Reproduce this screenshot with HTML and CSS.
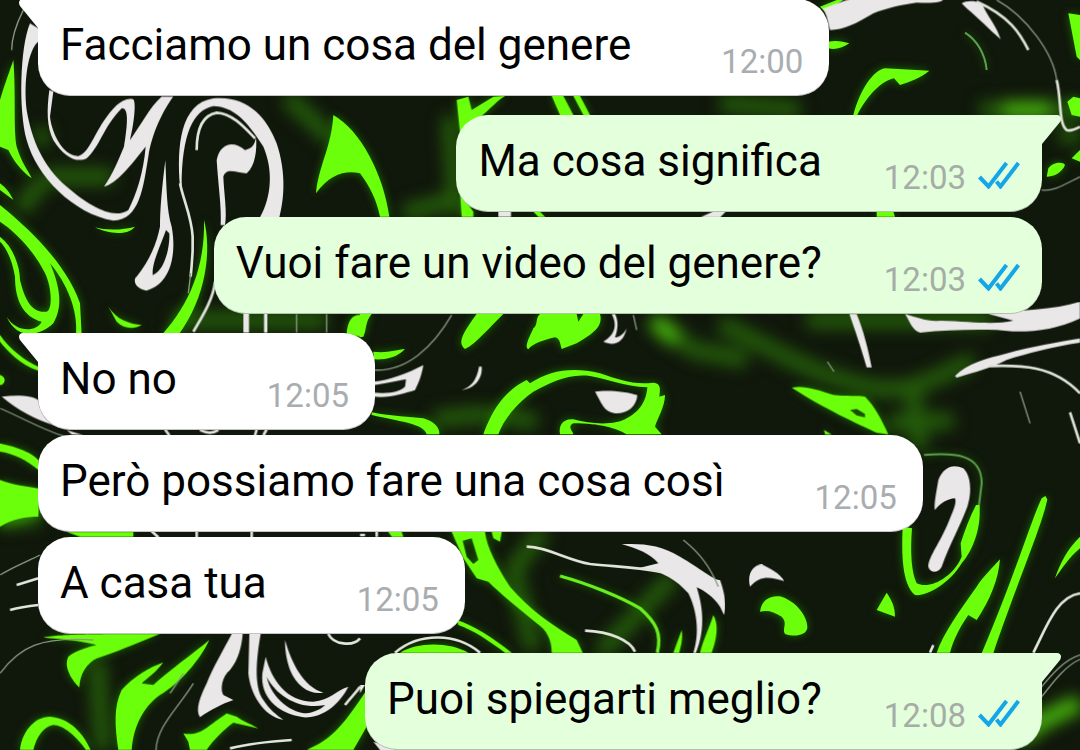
FILE: index.html
```html
<!DOCTYPE html>
<html lang="it">
<head>
<meta charset="utf-8">
<meta name="viewport" content="width=device-width, initial-scale=1">
<title>Chat</title>
<link rel="stylesheet" href="styles.css">
</head>
<body>
<svg class="wallpaper" viewBox="0 0 3240 2250" preserveAspectRatio="xMidYMid slice" aria-hidden="true">
  <defs>
    <symbol id="ticks" viewBox="0 0 42 28"><path d="M1.5 16L10.5 25.5L28.5 2M18.5 20.5L22.5 25.5L40.5 2"/></symbol>
    <symbol id="tail" viewBox="0 0 24 29"><path d="M24 0H4C0 0 -1 4 1 7L19 29H24Z"/></symbol>
  </defs>

  <!-- soft light trails -->
  <g class="glow">
    <path d="M2160 970C2310 1040 2420 1120 2620 1165C2720 1175 2760 1160 2920 1080"/>
    <path d="M2740 1180L2760 1350"/>
    <path d="M2160 310L2400 330M2940 330L3240 330M3180 400L3240 410"/>
    <path d="M1960 960L2080 1050L2240 1080"/>
    <path d="M1630 1590L1540 1710L1600 1950M2020 1730L1800 1960"/>
    <path d="M60 630L130 540M100 410L150 410M130 530L340 530"/>
    <path d="M860 290L1000 420M1210 640L1360 600M1350 350L1370 640"/>
    <path d="M1300 1260C1420 1240 1530 1240 1610 1270M2660 1270L2860 1262"/>
    <path d="M290 1980L310 2250M0 1560L120 1550M2420 960H2980M520 960H980"/>
    <path class="glow-bright" d="M3240 2110C3140 2150 3080 2190 3060 2220M0 1550L110 1510M1960 960L2030 1020M3010 330H3150"/>
  </g>

  <g class="neon">
    <g>
      <path d="M40 180C48 280 40 390 50 440C65 490 85 510 95 535C60 510 40 480 25 450L0 440V300C15 250 30 210 40 180Z"/>
      <path d="M0 550C20 565 30 580 40 600L0 570Z"/>
      <path d="M285 682C320 692 370 690 405 680C380 710 320 700 285 682Z"/>
      <path d="M1000 345C1080 390 1150 520 1168 650H1140C1130 600 1110 560 1080 520C1040 510 990 520 948 580C955 500 995 440 1000 345Z"/>
    </g>
    <g transform="translate(0 510)">
      <path d="M0 105C80 170 200 280 240 400L245 495H228C235 420 200 340 150 280C180 350 190 410 160 460C120 500 50 510 20 440C50 490 110 485 125 455C70 440 45 390 45 320C35 260 15 230 0 215V200C40 230 60 290 60 330C75 390 95 430 140 425C160 420 155 340 130 300C100 240 40 180 0 155Z"/>
      <path d="M612 150C635 240 620 380 535 495H485C570 400 615 290 612 150Z"/>
    </g>
    <g transform="translate(1080 0)">
      <path d="M290 300L325 290L335 330L400 290L435 288C400 310 380 340 360 350L300 400ZM575 288H610L640 345H600ZM640 288H660L690 345H670ZM300 580L340 635V650H305ZM520 635H540L555 650H535Z"/>
    </g>
    <g transform="translate(2160 0)">
      <path d="M325 125C350 120 370 125 388 130C365 145 345 150 325 145ZM300 20L350 0H370L315 35Z"/>
      <path d="M400 345C420 270 460 210 495 205L628 212C600 235 570 245 540 255L522 235C480 245 440 290 412 345Z"/>
      <path d="M1045 40L1080 45V180L1070 170ZM1042 305L1060 290L1080 295V350L1055 345ZM985 505C1000 485 1030 485 1035 495C1025 520 1000 530 980 530ZM1080 450L1055 475L1080 485ZM470 635H520L525 650H470Z"/>
      <path class="trace pale" d="M735 98C770 120 795 160 800 210"/>
    </g>
    <g transform="translate(0 750)">
      <path d="M0 255C30 300 80 335 115 350V362C60 345 20 300 0 275ZM325 170C350 210 390 222 425 225C400 240 370 235 350 215Z"/>
      <path d="M1040 250C1045 200 1065 195 1080 195V260ZM0 375C15 380 20 395 5 405H0ZM0 580C50 590 100 610 115 630V660C80 630 40 610 0 605ZM0 690C40 705 80 710 115 715V790H0Z"/>
    </g>
    <g transform="translate(1080 750)">
      <path d="M0 192H35C15 215 20 240 10 260L0 262ZM40 305C80 310 110 300 135 297C110 325 70 330 42 328Z"/>
      <path d="M350 192H430C390 230 350 280 315 297C295 280 300 260 350 192ZM540 192H650L655 215L670 192H720C730 230 700 250 650 280L605 297C600 280 600 265 585 262C550 270 520 280 505 298C490 290 515 250 520 235C535 225 525 205 540 192Z"/>
      <path d="M370 553C400 470 440 420 500 390L510 400C570 360 640 350 720 370C780 390 820 405 880 398C905 400 900 420 898 440L915 435C915 470 890 510 885 530L905 553H800C770 535 720 520 640 520C620 530 640 545 640 553H600C595 525 610 505 640 508C700 525 770 525 800 505C850 480 860 440 862 412C790 410 740 385 690 378C620 370 570 400 520 425C470 460 430 510 415 553Z"/>
      <path d="M35 487C100 500 150 500 190 505C225 515 240 535 238 553H200C190 520 120 515 35 495Z"/>
    </g>
    <g transform="translate(2160 750)">
      <path fill-rule="evenodd" d="M215 413C250 405 290 418 340 435C380 440 410 435 435 440C465 470 485 510 505 553L470 548C410 520 320 480 215 413ZM390 480L410 477L435 492V502L410 496Z"/>
      <path d="M312 540L335 553H315Z"/>
      <path class="trace pale" d="M612 615C700 608 785 610 785 700L775 780"/>
    </g>
    <g transform="translate(2670 1320)">
      <path d="M38 260L66 265C60 340 65 400 80 430C120 450 190 410 215 350L212 310C225 270 240 230 258 195H268C275 260 250 330 215 370C180 430 110 470 75 465C35 430 35 340 38 260Z"/>
      <path d="M455 175L466 168L472 178C455 260 400 380 310 640H275C370 420 420 250 455 175Z"/>
    </g>
    <g transform="translate(0 1500)">
      <path d="M0 0H115V50C80 50 40 55 0 80ZM200 96H400V110H240Z"/>
      <path d="M130 412C200 402 260 402 480 402C410 430 340 460 290 475C260 490 240 520 238 562C215 540 190 500 205 470C230 450 270 440 290 435C240 420 180 418 130 412Z"/>
      <path d="M628 420C600 480 540 550 480 585C430 620 400 680 395 750H355C345 680 340 620 365 570C400 530 450 500 490 487C465 520 440 535 425 550L460 555C510 510 580 460 628 420Z"/>
      <path d="M60 750C65 700 100 650 150 650C210 655 250 700 272 750H258C230 710 190 675 160 675C130 680 110 710 100 750ZM550 700C600 710 620 680 680 640L710 650C730 665 760 675 775 685L700 668C670 690 640 720 620 750H570L565 725ZM920 750C960 730 1000 720 1080 600L1100 570V680L1060 750Z"/>
    </g>
    <g transform="translate(1080 1500)">
      <path fill-rule="evenodd" d="M275 96H375C380 140 410 200 450 260C510 330 570 370 650 420L668 458H575C575 420 560 390 530 370C470 320 420 280 385 245L350 235L310 175ZM308 122L335 115L355 180L340 192L320 170Z"/>
      <path d="M395 96H425L420 125L400 115ZM85 96H125L130 110H95ZM290 360C340 375 400 415 455 458H435C390 425 340 390 295 375ZM965 390C970 420 960 445 958 458H940ZM1060 345C1080 380 1065 430 1055 458H1020C1030 420 1045 390 1060 345ZM120 458C170 425 270 425 325 458Z"/>
      <path class="trace" d="M600 228C680 250 780 290 840 325C890 370 905 400 892 458"/>
    </g>
    <g transform="translate(2160 1500)">
      <path d="M120 335C125 300 150 285 185 290C240 310 265 360 262 385C255 410 220 410 195 402C185 385 205 370 185 350C160 335 145 330 120 335ZM500 278C515 300 525 320 525 350L470 330Z"/>
      <path d="M840 178C835 240 810 300 770 360L745 345C720 380 700 420 690 458H650C670 400 720 330 770 260C790 230 820 200 840 178ZM1080 110V145C1050 170 1030 200 1005 235C1020 190 1040 150 1080 110Z"/>
    </g>
  </g>

  <g class="ink">
    <g>
      <path d="M90 70C60 140 55 330 80 420C110 530 220 640 340 662C420 660 430 560 445 470C455 400 490 330 520 290H485C450 320 420 380 390 420C400 380 410 310 400 298C370 290 340 320 310 365C280 410 265 460 235 468C190 470 155 400 150 350L160 275L148 270C140 330 140 380 160 420C190 470 230 490 260 475C300 440 310 380 365 325C390 320 380 390 372 440C355 480 340 520 312 560C350 550 390 500 437 440C430 520 410 580 385 630C340 660 270 620 200 560C130 500 95 420 80 330C70 240 85 150 115 125V85Z"/>
      <path d="M540 560C530 440 540 310 640 295C740 285 800 350 830 430C860 520 852 600 838 652H780C815 590 820 510 790 440C740 360 700 320 640 318C580 330 545 400 545 560Z"/>
      <path d="M650 480C660 430 700 420 735 450C760 445 765 430 768 410C772 450 765 500 740 520C710 520 680 500 670 530C672 580 682 640 675 675H662C665 620 655 560 650 480Z"/>
      <path class="trace" d="M590 450C590 380 610 345 650 338C700 340 740 390 765 415M540 550C550 600 575 650 578 710C580 770 575 790 572 830"/>
      <path class="hair" d="M70 30C50 70 35 110 35 150M572 820L565 880"/>
      <path fill-rule="evenodd" d="M496 480C500 570 500 630 515 680C530 760 515 850 440 872C400 865 400 835 410 830C450 780 470 730 480 680C480 630 485 570 496 480ZM498 690C480 740 455 790 458 825C490 815 510 750 508 700Z"/>
    </g>
    <g transform="translate(1080 0)"><path d="M415 632H453V650H415ZM1020 652L1065 632H1100L1080 652Z"/></g>
    <g transform="translate(2160 0)">
      <path d="M310 25C350 10 380 0 400 -5H670C670 8 640 10 590 8C540 15 500 25 460 40C410 70 370 90 330 90L320 50Z"/>
      <path d="M725 10C740 0 780 0 790 20C810 60 830 80 842 118C810 90 770 50 740 25Z"/>
      <path class="trace" d="M770 5C870 50 900 100 925 150M1010 240C1025 300 1015 370 1040 390C1055 395 1070 385 1080 380"/>
      <path class="hair" d="M830 0C920 50 1000 160 1010 240M965 570C1000 575 1030 555 1080 530"/>
    </g>
    <g transform="translate(0 750)">
      <path d="M730 190H747V248H730ZM792 190H802V248H792Z"/>
      <path d="M5 440C50 435 90 435 115 450C120 490 140 510 160 525C110 510 50 480 5 440ZM200 540L250 555L215 553Z"/>
      <path class="trace" d="M645 95C640 150 600 210 580 245M495 538L508 556M600 540C620 550 640 550 655 540M770 538L765 556M800 538L790 556"/>
      <path class="hair" d="M0 475C60 500 130 540 190 558M980 192V248M890 192V248"/>
    </g>
    <g transform="translate(1080 750)">
      <path d="M705 425C740 418 800 425 832 435C830 470 800 492 765 490C730 485 725 460 705 425ZM755 192C770 220 770 250 730 275C760 290 790 280 800 235C790 255 775 262 765 262C775 235 775 210 765 192Z"/>
      <path fill-rule="evenodd" d="M42 395C90 390 140 370 190 345C185 380 170 410 165 420C130 430 90 445 42 440V428C90 432 120 425 135 410L138 388C110 392 80 400 42 405ZM365 350C368 380 350 415 305 420C335 410 350 390 357 350Z"/>
      <path class="hair" d="M275 195C220 290 140 365 42 360M820 195L830 240"/>
    </g>
    <g transform="translate(2160 750)">
      <path d="M388 192H410C430 240 445 300 455 352H440C425 300 405 240 388 192ZM555 192C600 205 620 215 660 212C760 215 820 225 880 212L805 192C900 180 1000 180 1080 155V205C1000 245 900 250 830 240C750 238 680 240 600 248C575 240 570 215 555 192Z"/>
      <path d="M705 378C740 340 800 325 860 310C930 290 1020 275 1080 265V278C1000 290 920 310 860 330C810 355 770 365 710 383Z"/>
      <path class="trace" d="M810 348C900 345 1000 345 1080 430M1050 487L1080 580"/>
      <path class="hair" d="M900 425L930 520M322 335L342 365"/>
    </g>
    <g transform="translate(2670 1320)">
      <path d="M145 120C160 80 190 70 220 85C245 110 245 160 232 200C210 260 180 310 155 380C145 400 120 400 115 380C115 350 150 310 178 240C190 210 200 190 195 175C175 175 150 190 135 210C130 200 140 150 145 120Z"/>
    </g>
    <g transform="translate(0 1500)">
      <path d="M695 402H728C725 440 715 480 690 510C665 530 660 570 670 585L700 600C670 610 630 630 600 652C585 630 600 590 620 550C640 500 670 450 695 402ZM748 402H782C770 470 760 560 790 600C810 630 830 645 850 660C790 650 750 580 745 520Z"/>
      <path d="M855 420C875 490 910 560 970 578C930 585 890 560 870 510C858 475 855 450 855 420Z"/>
      <path fill-rule="evenodd" d="M797 470C815 540 860 605 940 605C990 600 1010 570 1045 560C1020 610 970 655 910 652C830 640 780 590 787 520ZM800 530C815 600 880 640 920 640C950 635 965 625 975 615C900 630 830 590 800 530Z"/>
      <path class="trace" d="M985 402C1000 435 1060 440 1080 415M50 255L115 235M30 330C60 322 90 318 115 315M690 745C750 730 800 725 875 720M1035 615C1050 595 1070 575 1080 560M455 94L475 112M590 94V112M755 94V112"/>
      <path class="hair" d="M0 520C60 440 120 410 280 420M0 225C40 200 80 185 120 165M580 550C530 630 470 680 468 750M510 580L550 520"/>
    </g>
    <g transform="translate(1080 1500)">
      <path d="M785 133C850 130 900 135 960 170C1020 205 1060 240 1080 240C1095 280 1100 320 1092 345L1080 320C1060 290 1030 270 1010 262C1025 310 1040 380 1008 458H1000C1020 400 1010 330 985 280C950 240 910 215 840 203L895 190C870 160 830 145 785 133Z"/>
      <path class="trace" d="M105 458C180 395 290 400 360 458M500 140C560 140 620 180 690 192C760 200 820 200 900 215M675 392C750 395 810 420 825 455M0 105H15M50 96V110"/>
      <path class="hair" d="M970 120C1020 160 1050 200 1075 260"/>
      <path d="M0 555V580L15 555ZM40 725L110 750H60Z"/>
    </g>
    <g transform="translate(2160 1500)">
      <path d="M90 260C80 220 100 195 125 193C150 205 180 220 193 243C150 230 120 225 90 260Z"/>
      <path class="trace" d="M1080 280C1010 290 980 380 940 458M630 458L640 435"/>
      <path class="hair" d="M1080 465C1030 480 990 530 965 560M1080 478C1030 500 990 560 965 590"/>
    </g>
  </g>
</svg>

<main class="chat">
  <ol class="messages">
    <li class="message received first">
      <svg class="tail" aria-hidden="true"><use href="#tail"/></svg>
      <p class="text">Facciamo un cosa del genere</p>
      <time class="time">12:00</time>
    </li>
    <li class="message sent first">
      <svg class="tail" aria-hidden="true"><use href="#tail"/></svg>
      <p class="text">Ma cosa significa</p>
      <time class="time">12:03</time>
      <svg class="ticks" role="img" aria-label="Letto"><use href="#ticks"/></svg>
    </li>
    <li class="message sent">
      <p class="text">Vuoi fare un video del genere?</p>
      <time class="time">12:03</time>
      <svg class="ticks" role="img" aria-label="Letto"><use href="#ticks"/></svg>
    </li>
    <li class="message received first">
      <svg class="tail" aria-hidden="true"><use href="#tail"/></svg>
      <p class="text">No no</p>
      <time class="time">12:05</time>
    </li>
    <li class="message received">
      <p class="text">Però possiamo fare una cosa così</p>
      <time class="time">12:05</time>
    </li>
    <li class="message received">
      <p class="text">A casa tua</p>
      <time class="time">12:05</time>
    </li>
    <li class="message sent first">
      <svg class="tail" aria-hidden="true"><use href="#tail"/></svg>
      <p class="text">Puoi spiegarti meglio?</p>
      <time class="time">12:08</time>
      <svg class="ticks" role="img" aria-label="Letto"><use href="#ticks"/></svg>
    </li>
  </ol>
</main>
</body>
</html>
```

FILE: styles.css
```css
* {
  box-sizing: border-box;
}

body {
  margin: 0;
  background: #10170b;
  color: #000;
  font-family: Roboto, "Liberation Sans", sans-serif;
}

/* Wallpaper */

.wallpaper {
  position: fixed;
  inset: 0;
  width: 100%;
  height: 100%;
}

.glow {
  fill: none;
  stroke: #245c0a;
  stroke-width: 50px;
  filter: blur(24px);
}

.glow-bright {
  stroke: #48b80c;
}

.neon {
  fill: #6cff0c;
  filter: drop-shadow(0 0 12px #1c7000);
}

.neon .trace {
  fill: none;
  stroke: #6bee20;
  stroke-width: 10px;
}

.neon .pale {
  stroke: #5fa050;
  stroke-width: 6px;
}

.ink {
  fill: #e9e7e7;
}

.ink .trace {
  fill: none;
  stroke: #e0e4da;
  stroke-width: 8px;
}

.ink .hair {
  fill: none;
  stroke: #8a9a84;
  stroke-width: 4px;
}

/* Conversation */

.chat {
  position: relative;
  display: flex;
  flex-direction: column;
  justify-content: flex-end;
  height: 100vh;
  overflow: hidden;
}

.messages {
  display: flex;
  flex-direction: column;
  gap: 5px;
  margin: 0;
  padding: 0 38px;
  list-style: none;
}

.message {
  position: relative;
  display: flex;
  align-items: flex-end;
  padding: 18px 22px 14px;
  border-radius: 32px;
  box-shadow: inset 0 -1px rgba(60, 60, 60, 0.3);
}

.message.first:not(:first-child) {
  margin-top: 14px;
}

.received {
  align-self: flex-start;
  gap: 90px;
  padding-right: 26px;
  background: #fff;
}

.sent {
  align-self: flex-end;
  gap: 62px;
  background: #e4ffdb;
}

.received.first {
  border-top-left-radius: 0;
}

.sent.first {
  border-top-right-radius: 0;
}

.text {
  margin: 0 0 9px;
  font-size: 44px;
  line-height: 56px;
}

.time {
  color: #a9adb0;
  font-size: 33px;
  line-height: 40px;
}

.sent .time {
  color: #a5ada6;
}

.ticks {
  width: 42px;
  height: 28px;
  margin: 0 0 9px -50px;
  fill: none;
  stroke: #15a6e8;
  stroke-width: 4px;
}

.tail {
  position: absolute;
  top: 0;
  width: 24px;
  height: 29px;
}

.received .tail {
  left: -19px;
  fill: #fff;
}

.sent .tail {
  right: -19px;
  fill: #e4ffdb;
  transform: scaleX(-1);
}
```
